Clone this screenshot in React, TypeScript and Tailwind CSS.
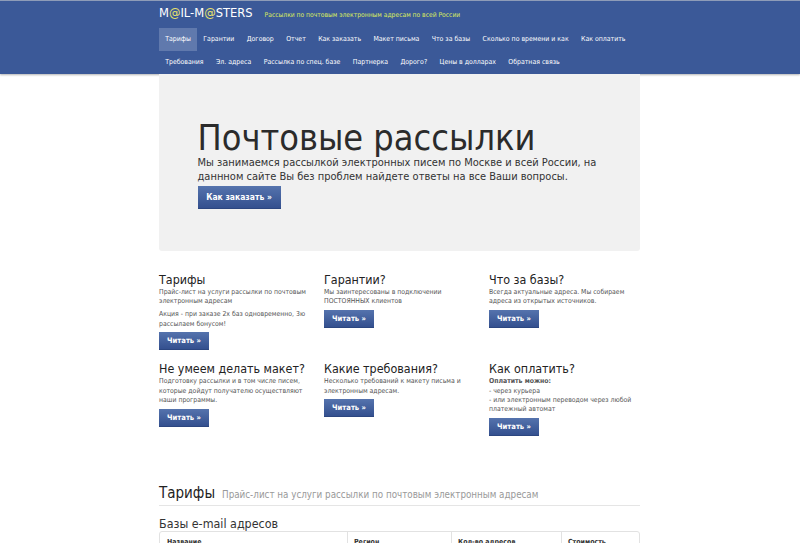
import React from 'react';

const navRows = [
  ['Тарифы', 'Гарантии', 'Договор', 'Отчет', 'Как заказать', 'Макет письма', 'Что за базы', 'Сколько по времени и как', 'Как оплатить'],
  ['Требования', 'Эл. адреса', 'Рассылка по спец. базе', 'Партнерка', 'Дорого?', 'Цены в долларах', 'Обратная связь'],
];

const ReadButton: React.FC = () => (
  <button className="mt-[3.5px] block h-[18px] w-[50px] border-b border-[#2c4680] bg-gradient-to-b from-[#5573ad] to-[#34508f] text-center text-[7.6px] leading-[17px] font-bold text-white">
    Читать »
  </button>
);

const Card: React.FC<{ title: string; children: React.ReactNode }> = ({ title, children }) => (
  <div className="w-[150px]">
    <h2 className="pt-[1px] text-[12.4px] leading-[16px] whitespace-nowrap text-[#222]">{title}</h2>
    <div className="text-[6.85px] leading-[9.3px] text-[#555]">{children}</div>
  </div>
);

export default function App() {
  return (
    <div className="h-[543px] overflow-hidden bg-white font-['DejaVu_Sans_Condensed','DejaVu_Sans',sans-serif]">
      <header className="h-[74px] border-t border-[#8e9cb8] bg-[#3b5998] shadow-[0_1px_2px_rgba(0,0,0,0.3)]">
        <div className="mx-auto w-[482px]">
          <div className="flex h-[27px] items-center pb-[3px]">
            <span className="text-[12.8px] text-white">
              M<span className="text-[#e9e36a]">@</span>IL-M<span className="text-[#e9e36a]">@</span>STERS
            </span>
            <span className="mt-[4px] ml-[12px] text-[6.7px] text-[#d9ea5e]">Рассылки по почтовым электронным адресам по всей России</span>
          </div>
          {navRows.map((row, i) => (
            <nav key={i} className="flex h-[23px] text-[6.9px] whitespace-nowrap text-white">
              {row.map((item, j) => (
                <a
                  key={item}
                  className={`flex items-center px-[6.2px] ${i === 0 && j === 0 ? 'bg-[#6079ad]' : ''}`}
                >
                  {item}
                </a>
              ))}
            </nav>
          ))}
        </div>
      </header>

      <main className="mx-auto w-[482px]">
        <section className="h-[177px] w-[481px] rounded-b-[3px] bg-[#f1f1f1] pt-[45px] pl-[38.5px]">
          <h1 className="text-[35.8px] leading-[37px] text-[#2b2b2b]">Почтовые рассылки</h1>
          <p className="w-[420px] text-[11px] leading-[13.5px] text-[#333]">
            Мы занимаемся рассылкой электронных писем по Москве и всей России, на даннном сайте Вы без проблем найдете ответы на все Ваши вопросы.
          </p>
          <button className="mt-[3px] block h-[23px] w-[83px] border-b border-[#2c4680] bg-gradient-to-b from-[#5573ad] to-[#34508f] text-center text-[8.5px] font-bold text-white">
            Как заказать »
          </button>
        </section>

        <section className="mt-[20px] grid grid-cols-[165px_165px_152px] gap-y-[10px]">
          <Card title="Тарифы">
            <p>Прайс-лист на услуги рассылки по почтовым электронным адресам</p>
            <p className="mt-[3.7px]">Акция - при заказе 2х баз одновременно, 3ю рассылаем бонусом!</p>
            <ReadButton />
          </Card>
          <Card title="Гарантии?">
            <p>Мы заинтересованы в подключении ПОСТОЯННЫХ клиентов</p>
            <ReadButton />
          </Card>
          <Card title="Что за базы?">
            <p>Всегда актуальные адреса. Мы собираем адреса из открытых источников.</p>
            <ReadButton />
          </Card>
          <Card title="Не умеем делать макет?">
            <p>Подготовку рассылки и в том числе писем, которые дойдут получателю осуществляют наши программы.</p>
            <ReadButton />
          </Card>
          <Card title="Какие требования?">
            <p>Несколько требований к макету письма и электронным адресам.</p>
            <ReadButton />
          </Card>
          <Card title="Как оплатить?">
            <p className="font-bold">Оплатить можно:</p>
            <p>- через курьера</p>
            <p>- или электронным переводом через любой платежный автомат</p>
            <ReadButton />
          </Card>
        </section>

        <section className="mt-[46px] w-[481px]">
          <div className="flex h-[24px] items-baseline border-b border-[#e5e5e5] pt-[1px]">
            <h2 className="text-[15px] leading-[20px] text-[#222]">Тарифы</h2>
            <span className="ml-[7px] text-[9.75px] text-[#999]">Прайс-лист на услуги рассылки по почтовым электронным адресам</span>
          </div>
          <h3 className="mt-[11px] text-[12.4px] leading-[14px] text-[#333]">Базы e-mail адресов</h3>
          <div className="grid h-[30px] grid-cols-[187px_104px_110px_78px] rounded-t-[3px] border border-[#e2e2e2] text-[7px] font-bold text-[#333]">
            <div className="pt-[5px] pl-[7px]">Название</div>
            <div className="border-l border-[#e2e2e2] pt-[5px] pl-[6px]">Регион</div>
            <div className="border-l border-[#e2e2e2] pt-[5px] pl-[6px]">Кол-во адресов</div>
            <div className="border-l border-[#e2e2e2] pt-[5px] pl-[6px]">Стоимость</div>
          </div>
        </section>
      </main>
    </div>
  );
}
